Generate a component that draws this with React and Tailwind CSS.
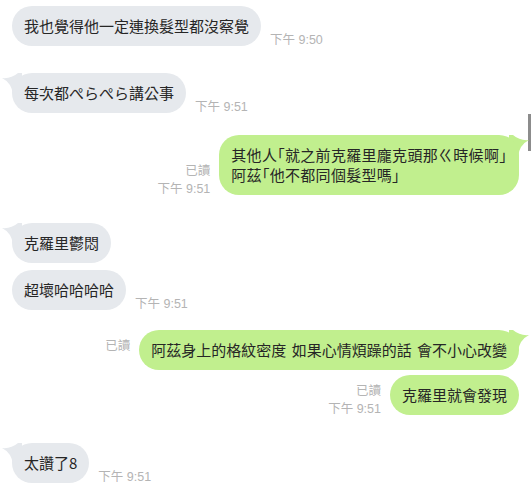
import React from 'react';

const font = { fontFamily: '"Noto Sans CJK TC", "Liberation Sans", sans-serif' };

const LeftTail = () => (
  <svg className="absolute left-[-10px] top-0" width="20" height="22" viewBox="0 0 20 22">
    <path d="M0,5 Q9,6 16,0 L20,0 L20,22 L11,22 Q10,10 0,5 Z" fill="#e6e9ed" />
  </svg>
);

const RightTail = () => (
  <svg className="absolute right-[-10px] top-0" width="20" height="22" viewBox="0 0 20 22">
    <path d="M20,5 Q11,6 4,0 L0,0 L0,22 L9,22 Q10,10 20,5 Z" fill="#c1ef8e" />
  </svg>
);

const Time = ({ children }) => (
  <span className="text-[12.5px] leading-[18px] text-[#b4b4b4] whitespace-nowrap font-['Liberation_Sans','Noto_Sans_CJK_TC',sans-serif]">
    {children}
  </span>
);

const Left = ({ text, time, tail, className }) => (
  <div className={`flex items-end pl-3 ${className}`}>
    <div className="relative">
      {tail && <LeftTail />}
      <div className="relative rounded-[20px] bg-[#e6e9ed] px-3 py-2.5 text-[15px] leading-5 text-[#262626]">
        {text}
      </div>
    </div>
    {time && <div className="ml-[9px] mb-[-3px]"><Time>{time}</Time></div>}
  </div>
);

const Right = ({ lines, time, tail, className, extra = '' }) => (
  <div className={`flex items-end justify-end pr-3 ${className}`}>
    <div className="mr-[9px] mb-[-3px] flex flex-col items-end">
      <Time>已讀</Time>
      {time ? <Time>{time}</Time> : <span className="h-[18px]" />}
    </div>
    <div className="relative">
      {tail && <RightTail />}
      <div className={`relative rounded-[20px] bg-[#c1ef8e] px-3 py-2.5 text-[15px] leading-5 text-[#262626] ${extra}`}>
        {lines.map((l, i) => (
          <div key={i} className="whitespace-nowrap">{l}</div>
        ))}
      </div>
    </div>
  </div>
);

export default function App() {
  return (
    <div className="relative w-[531px] h-[489px] overflow-hidden bg-white" style={font}>
      <div className="absolute right-0 top-[114px] w-[3px] h-[37px] bg-[#8c8c8c]" />
      <Left className="pt-[6px]" text="我也覺得他一定連換髮型都沒察覺" time="下午 9:50" />
      <Left className="mt-[27px]" tail text="每次都ぺらぺら講公事" time="下午 9:51" />
      <Right
        className="mt-[22px]"
        tail
        extra="[font-feature-settings:'halt'] tracking-[0.3px]"
        lines={['其他人「就之前克羅里龐克頭那ㄍ時候啊」', '阿茲「他不都同個髮型嗎」']}
        time="下午 9:51"
      />
      <Left className="mt-[28px]" tail text="克羅里鬱悶" />
      <Left className="mt-[7px]" text="超壞哈哈哈哈" time="下午 9:51" />
      <Right
        className="mt-[20px]"
        tail
        extra="[word-spacing:2px]"
        lines={['阿茲身上的格紋密度 如果心情煩躁的話 會不小心改變']}
      />
      <Right className="mt-[5px]" lines={['克羅里就會發現']} time="下午 9:51" />
      <Left className="mt-[28px]" tail text="太讚了8" time="下午 9:51" />
    </div>
  );
}
